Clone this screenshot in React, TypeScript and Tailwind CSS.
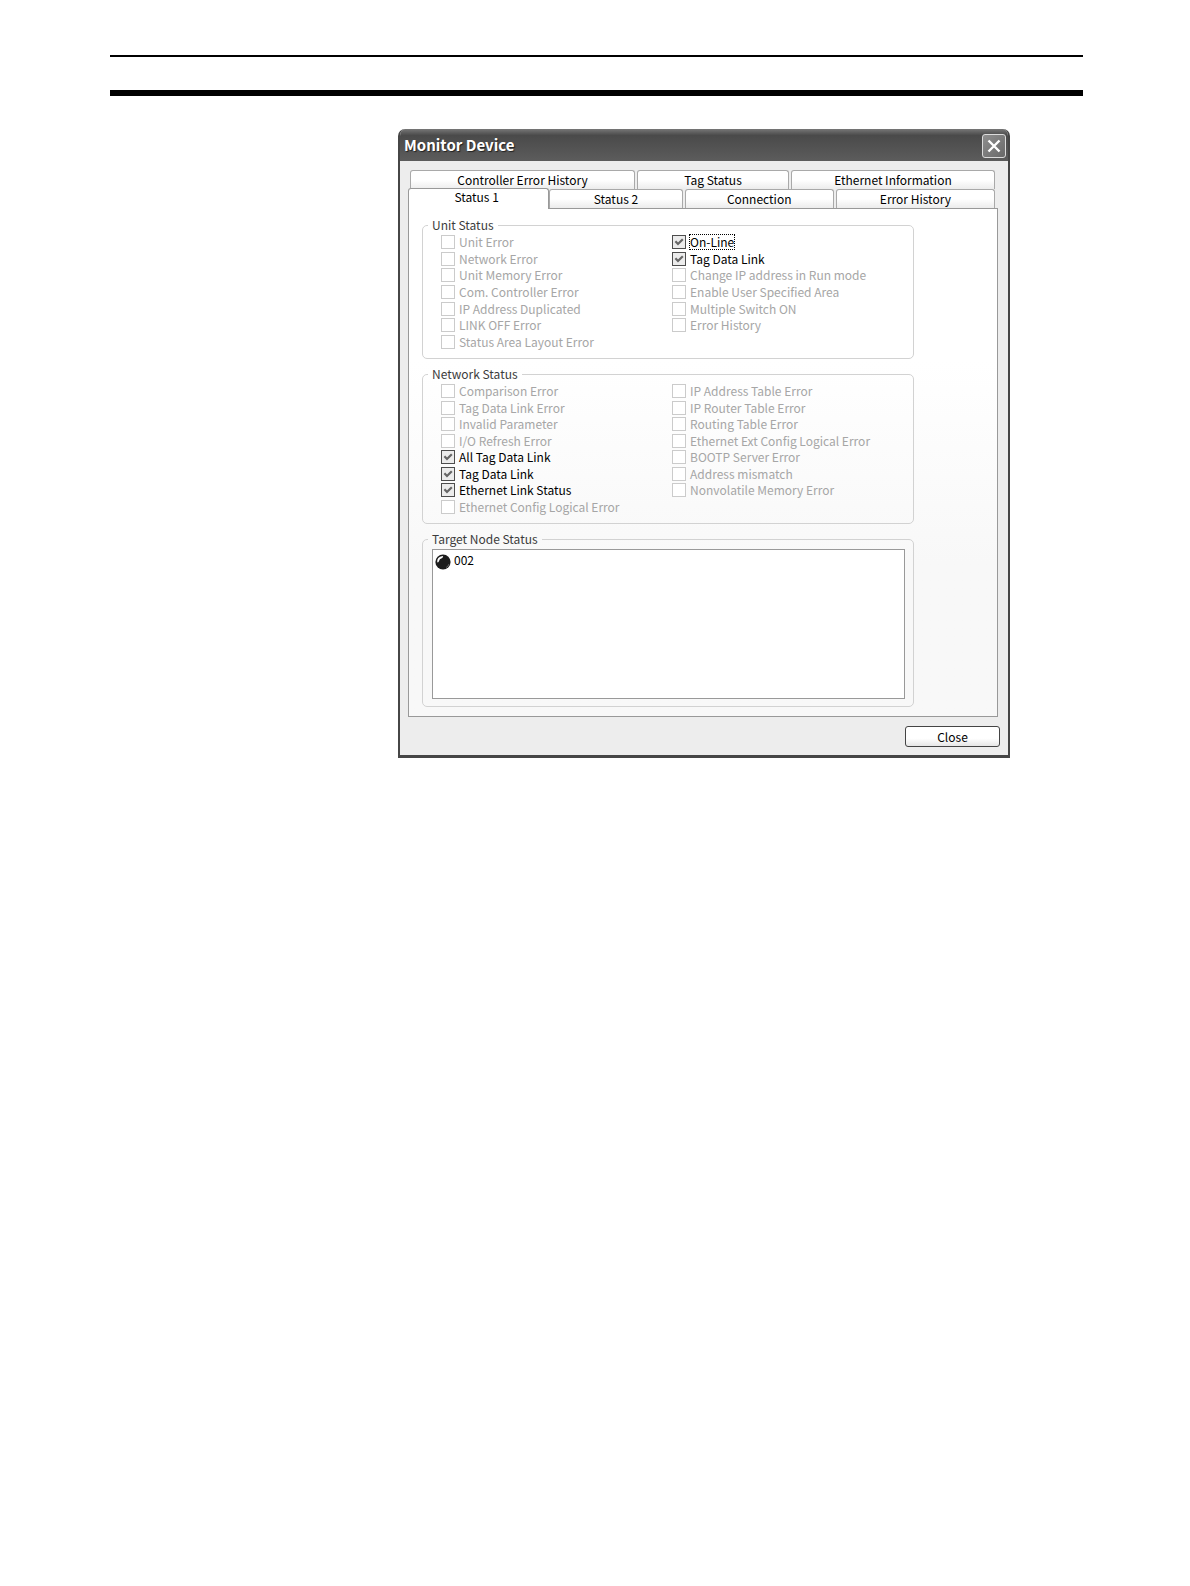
import { useState } from "react";

type Item = { label: string; on?: boolean; focused?: boolean };

const unitLeft: Item[] = [
  { label: "Unit Error" },
  { label: "Network Error" },
  { label: "Unit Memory Error" },
  { label: "Com. Controller Error" },
  { label: "IP Address Duplicated" },
  { label: "LINK OFF Error" },
  { label: "Status Area Layout Error" },
];

const unitRight: Item[] = [
  { label: "On-Line", on: true, focused: true },
  { label: "Tag Data Link", on: true },
  { label: "Change IP address in Run mode" },
  { label: "Enable User Specified Area" },
  { label: "Multiple Switch ON" },
  { label: "Error History" },
];

const networkLeft: Item[] = [
  { label: "Comparison Error" },
  { label: "Tag Data Link Error" },
  { label: "Invalid Parameter" },
  { label: "I/O Refresh Error" },
  { label: "All Tag Data Link", on: true },
  { label: "Tag Data Link", on: true },
  { label: "Ethernet Link Status", on: true },
  { label: "Ethernet Config Logical Error" },
];

const networkRight: Item[] = [
  { label: "IP Address Table Error" },
  { label: "IP Router Table Error" },
  { label: "Routing Table Error" },
  { label: "Ethernet Ext Config Logical Error" },
  { label: "BOOTP Server Error" },
  { label: "Address mismatch" },
  { label: "Nonvolatile Memory Error" },
];

function Check({ label, on = false, focused = false }: Item) {
  const [checked, setChecked] = useState(on);
  return (
    <label
      className={
        on
          ? "flex items-center gap-[3px] whitespace-nowrap text-black"
          : "flex items-center gap-[3px] whitespace-nowrap text-[#a6a6a6]"
      }
    >
      <span className="grid size-[14px] shrink-0">
        <input
          type="checkbox"
          checked={checked}
          disabled={!on}
          onChange={(e) => setChecked(e.target.checked)}
          className="col-start-1 row-start-1 size-[14px] appearance-none border border-[#4d4d4d] bg-[#ececec] disabled:border-[#cbcbcb] disabled:bg-white"
        />
        {checked && (
          <svg
            viewBox="0 0 14 14"
            className="pointer-events-none col-start-1 row-start-1 size-[14px]"
            fill="none"
            stroke="#666"
            strokeWidth="2.2"
          >
            <path d="M3.4 6.2 L6 9 L10.8 4.2" />
          </svg>
        )}
      </span>
      <span
        className={
          focused
            ? "h-4 border border-dotted border-black leading-[13px]"
            : "border-x border-transparent leading-4"
        }
      >
        {label}
      </span>
    </label>
  );
}

function Group({ title, children }: { title: string; children: React.ReactNode }) {
  return (
    <fieldset className="min-w-0 rounded-[5px] border border-[#d2d2d2] px-[5px]">
      <legend className="px-1 leading-[18px] text-[#3c3c3c]">{title}</legend>
      {children}
    </fieldset>
  );
}

const tabBase =
  "h-full min-w-0 rounded-t-[3px] border border-b-0 border-[#a9a9a9] bg-linear-to-b from-white from-50% to-[#ececec] text-black leading-[18px]";

export default function App() {
  return (
    <div className="min-h-screen bg-white pt-[55px] pr-[107px] pl-[110px] font-['Noto_Sans_CJK_JP',sans-serif] text-[12px]">
      <header className="h-[41px] border-t-2 border-b-6 border-black" />

      <main className="mt-[33px] pl-72">
        <section
          aria-labelledby="window-title"
          className="w-full max-w-[612px] overflow-hidden rounded-t-[7px] border-x-2 border-b-3 border-[#464646] bg-[#ededed]"
        >
          <div className="flex h-8 items-center justify-between bg-linear-to-b from-[#777] via-[#4a4a4a] via-20% to-[#5c5c5c] pr-[2px] pl-1">
            <h1
              id="window-title"
              className="text-[15px] font-bold text-white [text-shadow:1px_1px_1px_#222]"
            >
              Monitor Device
            </h1>
            <button
              type="button"
              aria-label="Close window"
              className="mt-0.5 flex size-6 items-center justify-center rounded-[3px] border border-[#dcdcdc] bg-linear-to-br from-[#8f8f8f] to-[#696969]"
            >
              <svg viewBox="0 0 14 14" className="size-[14px]" fill="none" stroke="#fff" strokeWidth="2.4">
                <path d="M1.5 1.5 L12.5 12.5 M12.5 1.5 L1.5 12.5" />
              </svg>
            </button>
          </div>

          <div className="pt-[9px] pr-[10px] pl-2">
            <div role="tablist" aria-label="Monitor pages">
              <div className="grid h-[18px] grid-cols-[225fr_152fr_204fr] gap-x-[2px] pr-[3px] pl-[2px]">
                <button type="button" role="tab" className={tabBase}>Controller Error History</button>
                <button type="button" role="tab" className={tabBase}>Tag Status</button>
                <button type="button" role="tab" className={tabBase}>Ethernet Information</button>
              </div>
              <div className="flex h-5 pr-[3px]">
                <button
                  type="button"
                  role="tab"
                  aria-selected="true"
                  className="relative z-10 -mb-px h-[21px] flex-[140] rounded-t-[3px] border border-b-0 border-[#999] bg-white leading-4 text-black"
                >
                  <span className="block pr-1 pb-1">Status 1</span>
                </button>
                <div className="grid flex-[448] grid-cols-[134fr_150fr_160fr] gap-x-[2px] pt-px">
                  <button type="button" role="tab" className={tabBase}>Status 2</button>
                  <button type="button" role="tab" className={tabBase}>Connection</button>
                  <button type="button" role="tab" className={tabBase}>Error History</button>
                </div>
              </div>
            </div>

            <div
              role="tabpanel"
              className="flex flex-col gap-1.5 border border-[#999] bg-linear-to-b from-white from-30% to-[#f8f8f8] to-70% pt-[7px] pr-[83px] pb-[9px] pl-[13px]"
            >
              <Group title="Unit Status">
                <div className="grid h-[124px] grid-flow-col grid-cols-[231fr_236fr] grid-rows-7 pb-2 pl-[13px]">
                  {unitLeft.map((i) => (
                    <Check key={i.label} {...i} />
                  ))}
                  {unitRight.map((i) => (
                    <Check key={i.label} {...i} />
                  ))}
                </div>
              </Group>
              <Group title="Network Status">
                <div className="grid h-[140px] grid-flow-col grid-cols-[231fr_236fr] grid-rows-8 pb-2 pl-[13px]">
                  {networkLeft.map((i) => (
                    <Check key={i.label} {...i} />
                  ))}
                  {networkRight.map((i) => (
                    <Check key={i.label} {...i} />
                  ))}
                </div>
              </Group>
              <Group title="Target Node Status">
                <ul
                  aria-label="Target nodes"
                  className="mt-px mr-[3px] mb-[7px] ml-1 h-[150px] border border-[#999] bg-white px-[2px] pt-[3px] text-black"
                >
                  <li className="flex items-start gap-[3px] leading-[14px]">
                    <svg viewBox="0 0 16 16" className="mt-px size-4 shrink-0">
                      <circle cx="8" cy="8" r="7.6" fill="#1c1c1c" />
                      <path d="M2.2 8 Q1.8 3 7.6 2 Q9 2.6 7.2 4 Q4.2 5 3.8 7.4 Q2.8 9.2 2.2 8Z" fill="#fff" />
                      <path d="M11 13.6 Q13.4 12.4 14 10" fill="none" stroke="#777" strokeWidth="0.8" />
                    </svg>
                    <span>002</span>
                  </li>
                </ul>
              </Group>
            </div>
          </div>

          <footer className="flex justify-end pt-[9px] pr-2 pb-2">
            <button
              type="button"
              className="h-[21px] w-[95px] rounded-[3px] border border-[#444] bg-linear-to-b from-white from-60% to-[#e6e6e6] leading-[18px] text-black"
            >
              Close
            </button>
          </footer>
        </section>
      </main>
    </div>
  );
}
